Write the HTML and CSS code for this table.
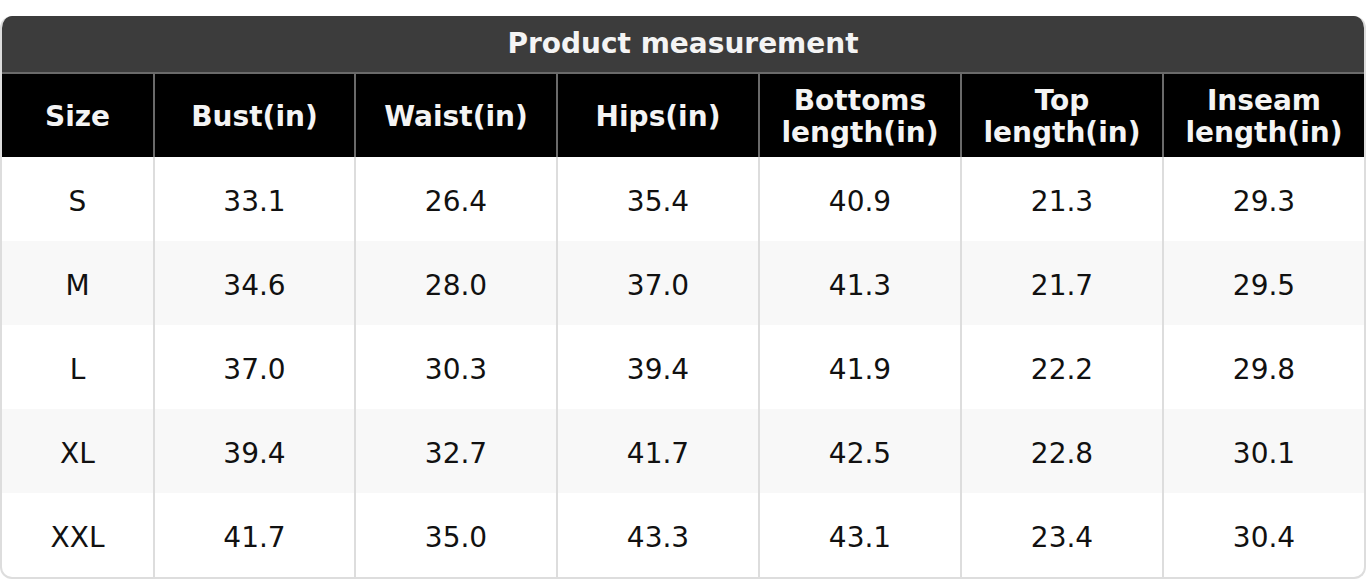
FILE: index.html
```html
<!DOCTYPE html>
<html>
<head>
<meta charset="utf-8">
<link rel="stylesheet" href="styles.css">
</head>
<body>
<div class="chart">
  <div class="title">Product measurement</div>
  <table class="grid">
    <colgroup>
      <col class="c-size"><col class="c-bust"><col class="c-std"><col class="c-std"><col class="c-std"><col class="c-std"><col>
    </colgroup>
    <thead>
      <tr>
        <th>Size</th><th>Bust(in)</th><th>Waist(in)</th><th>Hips(in)</th><th>Bottoms<br>length(in)</th><th>Top<br>length(in)</th><th>Inseam<br>length(in)</th>
      </tr>
    </thead>
    <tbody>
      <tr><td>S</td><td>33.1</td><td>26.4</td><td>35.4</td><td>40.9</td><td>21.3</td><td>29.3</td></tr>
      <tr class="alt"><td>M</td><td>34.6</td><td>28.0</td><td>37.0</td><td>41.3</td><td>21.7</td><td>29.5</td></tr>
      <tr><td>L</td><td>37.0</td><td>30.3</td><td>39.4</td><td>41.9</td><td>22.2</td><td>29.8</td></tr>
      <tr class="alt"><td>XL</td><td>39.4</td><td>32.7</td><td>41.7</td><td>42.5</td><td>22.8</td><td>30.1</td></tr>
      <tr><td>XXL</td><td>41.7</td><td>35.0</td><td>43.3</td><td>43.1</td><td>23.4</td><td>30.4</td></tr>
    </tbody>
  </table>
</div>
</body>
</html>
```

FILE: styles.css
```css
html, body {
  margin: 0;
  padding: 0;
  background: #ffffff;
}
body {
  font-family: "DejaVu Sans", sans-serif;
  padding-top: 16px;
}
.chart {
  width: 1366px;
  box-sizing: border-box;
  border-radius: 12px;
  overflow: hidden;
  border: 2px solid #dddddd;
  border-top: none;
  background: #ffffff;
}
.title {
  height: 58px;
  background: #3c3c3c;
  color: #f4f4f4;
  font-weight: bold;
  font-size: 28px;
  display: flex;
  align-items: center;
  justify-content: center;
  border-bottom: 2px solid #6a6a6a;
  margin: 0 -2px;
  padding-bottom: 2px;
  box-sizing: border-box;
}
.grid {
  width: 100%;
  border-collapse: collapse;
  table-layout: fixed;
}
.c-size { width: 152px; }
.c-bust { width: 201px; }
.c-std { width: 202px; }
.grid th {
  background: #000000;
  color: #f4f4f4;
  font-weight: bold;
  font-size: 28px;
  line-height: 32px;
  height: 81px;
  padding: 2px 0 0;
  text-align: center;
  border-left: 2px solid #6a6a6a;
}
.grid td {
  font-size: 28px;
  color: #111111;
  height: 80px;
  padding: 4px 0 0;
  text-align: center;
  border-left: 2px solid #dddddd;
}
.grid th:first-child, .grid td:first-child {
  border-left: none;
}
.grid tr.alt td {
  background: #f8f8f8;
}
```
